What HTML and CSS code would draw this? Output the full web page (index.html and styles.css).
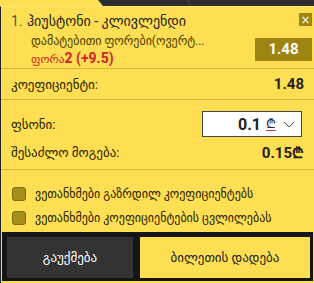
FILE: index.html
```html
<!DOCTYPE html>
<html lang="ka">
<head>
    <meta charset="UTF-8">
    <meta name="viewport" content="width=device-width, initial-scale=1.0">
    <title>Betslip</title>
    <link rel="stylesheet" href="styles.css">
</head>
<body>
    <div class="tabs">
        <div class="tab"></div>
        <div class="tab-sep"></div>
    </div>

    <div class="slip">
        <!-- Selected bet -->
        <div class="bet">
            <span class="bet-num">1.</span>
            <div class="bet-info">
                <div class="bet-title">ჰიუსტონი - კლივლენდი</div>
                <div class="bet-market">დამატებითი ფორები(ოვერტ...</div>
                <div class="bet-pick">ფორა<b>2 (+9.5)</b></div>
            </div>
            <div class="bet-side">
                <button class="close-btn">&times;</button>
                <div class="odd-box">1.48</div>
            </div>
        </div>

        <div class="row">
            <span class="label">კოეფიციენტი:</span>
            <span class="value">1.48</span>
        </div>

        <div class="stake">
            <div class="row row-plain">
                <span class="label">ფსონი:</span>
                <div class="stake-input">
                    <span class="stake-amount">0.1</span>
                    <span class="lari">₾</span>
                    <svg class="chevron" width="12" height="7" viewBox="0 0 12 7">
                        <path d="M1 1 L6 6 L11 1" fill="none" stroke="#555" stroke-width="1"/>
                    </svg>
                </div>
            </div>
            <div class="row row-plain row-win">
                <span class="label">შესაძლო მოგება:</span>
                <span class="value">0.15₾</span>
            </div>
        </div>

        <div class="options">
            <label class="option"><span class="check"></span>ვეთანხმები გაზრდილ კოეფიციენტებს</label>
            <label class="option"><span class="check"></span>ვეთანხმები კოეფიციენტების ცვლილებას</label>
        </div>

        <div class="footer">
            <button class="cancel-btn">გაუქმება</button>
            <button class="place-btn">ბილეთის დადება</button>
        </div>
    </div>
</body>
</html>
```

FILE: styles.css
```css
body {
    margin: 0;
    padding: 0;
    width: 314px;
    height: 283px;
    background-color: #2d2d2d;
    font-family: Roboto, "DejaVu Sans", sans-serif;
    overflow: hidden;
}

.tabs {
    height: 6px;
    background-color: #2d2d2d;
    position: relative;
}

.tab {
    width: 103px;
    height: 6px;
    background-color: #fede52;
    clip-path: polygon(0 0, 98px 0, 103px 100%, 0 100%);
}

.tab-sep {
    position: absolute;
    left: 189px;
    top: 0;
    width: 1px;
    height: 6px;
    background-color: #4a4a4a;
    transform: skewX(30deg);
}

.slip {
    background-color: #fede52;
    border-left: 1px solid #232323;
    border-top: 1px solid #ffe67a;
    height: 276px;
    display: flex;
    flex-direction: column;
}

/* Bet item */
.bet {
    display: flex;
    height: 61px;
    padding: 0 2px 0 10px;
    border-bottom: 1px solid #d9ba3c;
}

.bet-num {
    font-size: 14px;
    color: #555;
    line-height: 18px;
    padding-top: 5px;
    width: 20px;
}

.bet-info {
    padding-top: 5px;
    white-space: nowrap;
    flex: 1;
}

.bet-title {
    font-size: 14px;
    color: #222;
    line-height: 18px;
    margin-left: -4px;
}

.bet-market {
    font-size: 12px;
    color: #4d4000;
    line-height: 18px;
    margin-top: 2px;
}

.bet-pick {
    font-size: 11.5px;
    color: #d42129;
    line-height: 16px;
}

.bet-pick b {
    font-size: 14px;
    font-weight: 700;
}

.bet-side {
    display: flex;
    flex-direction: column;
    align-items: flex-end;
    padding-top: 6px;
}

.close-btn {
    width: 13px;
    height: 13px;
    padding: 0;
    border: none;
    background-color: #9c8511;
    color: #fff;
    font-size: 12px;
    line-height: 12px;
    font-family: "DejaVu Sans", sans-serif;
}

.odd-box {
    margin-top: 12px;
    width: 57px;
    height: 23px;
    background-color: #9c8511;
    color: #fff;
    font-weight: 700;
    font-size: 15px;
    line-height: 23px;
    text-align: center;
}

/* Rows */
.row {
    display: flex;
    justify-content: space-between;
    align-items: center;
    height: 30px;
    padding: 0 10px;
    border-bottom: 1px solid #d9ba3c;
}

.row-plain {
    border-bottom: none;
}

.label {
    font-size: 13px;
    color: #2a2200;
}

.value {
    font-size: 15px;
    font-weight: 700;
    color: #222;
}

.stake {
    padding-top: 10px;
    border-bottom: 1px solid #d9ba3c;
    height: 59px;
}

.stake .row {
    height: 28px;
}

.stake-input {
    width: 92px;
    height: 24px;
    background-color: #fff;
    border: 1px solid #444;
    display: flex;
    align-items: center;
    justify-content: flex-end;
    padding-right: 6px;
    margin-right: 2px;
}

.stake-amount {
    font-size: 16px;
    font-weight: 700;
    color: #222;
}

.lari {
    font-size: 13px;
    margin-left: 5px;
    color: #222;
    border-bottom: 1px solid #c44;
    line-height: 13px;
}

.chevron {
    margin-left: 7px;
}

.row-win {
    height: 24px;
}

/* Options */
.options {
    padding: 12px 0 0 11px;
    height: 50px;
}

.option {
    display: flex;
    align-items: center;
    height: 24px;
    font-size: 12px;
    color: #2a2200;
}

.check {
    width: 12px;
    height: 12px;
    border: 1px solid #7f6a0a;
    border-radius: 3px;
    background-color: #a58d1a;
    margin-right: 9px;
}

/* Footer */
.footer {
    margin: 0 1px 2px 1px;
    background-color: #151515;
    display: flex;
    gap: 7px;
    padding: 5px 3px 3px 5px;
    flex: 1;
}

.cancel-btn,
.place-btn {
    border: none;
    font-family: Roboto, "DejaVu Sans", sans-serif;
    font-size: 13px;
    text-transform: uppercase;
    cursor: pointer;
}

.cancel-btn {
    width: 126px;
    background-color: #333;
    color: #fff;
}

.place-btn {
    flex: 1;
    background-color: #fede52;
    color: #222;
}
```
